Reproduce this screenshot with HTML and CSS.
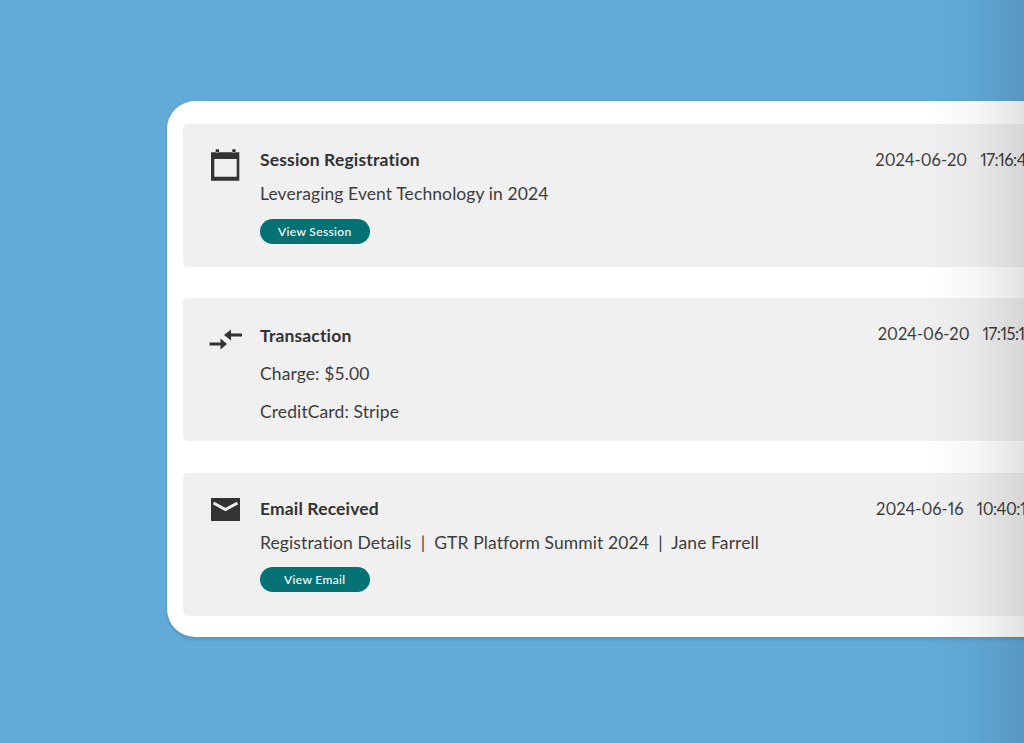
FILE: index.html
```html
<!DOCTYPE html>
<html lang="en">
<head>
    <meta charset="UTF-8">
    <meta name="viewport" content="width=device-width, initial-scale=1.0">
    <title>Activity</title>
    <link rel="stylesheet" href="styles.css">
</head>
<body>
    <div class="card">
        <div class="item">
            <div class="icon">
                <svg width="30" height="33" viewBox="0 0 30 33">
                    <path fill="#333" d="M5.700 1.300h3.300v3.500H5.700zM22.300 1.300h3.300v3.500h-3.300zM1 4.300h28.300v28.400H1zM4.300 11v17.700h22.400V11z" fill-rule="evenodd"/>
                </svg>
            </div>
            <div class="body">
                <div class="title">Session Registration</div>
                <div class="line">Leveraging Event Technology in 2024</div>
                <a class="btn">View Session</a>
            </div>
            <div class="stamp"><span>2024-06-20</span><span class="time">17:16:43</span></div>
        </div>
        <div class="item">
            <div class="icon icon-swap">
                <svg width="34" height="24" viewBox="0 0 34 24">
                    <path fill="#333" d="M16 7L23 1.500V5.500H34V8.500H23V12.500zM19 16L12.500 10.500V14.500H1.500V17.500H12.500V21.500z"/>
                </svg>
            </div>
            <div class="body">
                <div class="title title-low">Transaction</div>
                <div class="line line-wide">Charge: $5.00</div>
                <div class="line line-wide">CreditCard: Stripe</div>
            </div>
            <div class="stamp stamp-low"><span>2024-06-20</span><span class="time">17:15:10</span></div>
        </div>
        <div class="item">
            <div class="icon icon-mail">
                <svg width="30" height="23" viewBox="0 0 30 23">
                    <path fill="#333" d="M1 0h29v23H1z"/>
                    <path fill="none" stroke="#f0f0f0" stroke-width="3" d="M3.500 5L15.500 11.500L27.500 5"/>
                </svg>
            </div>
            <div class="body">
                <div class="title">Email Received</div>
                <div class="line">Registration Details &nbsp;|&nbsp; GTR Platform Summit 2024 &nbsp;|&nbsp; Jane Farrell</div>
                <a class="btn">View Email</a>
            </div>
            <div class="stamp"><span>2024-06-16</span><span class="time">10:40:13</span></div>
        </div>
    </div>
    <div class="edge"></div>
</body>
</html>
```

FILE: styles.css
```css
html, body {
    height: 100%;
}

body {
    margin: 0;
    overflow: hidden;
    background-color: #62abd9;
    font-family: Lato, "Liberation Sans", sans-serif;
    color: #333;
    padding: 101px 0 0 167px;
    box-sizing: border-box;
}

.card {
    width: 920px;
    height: 536px;
    box-sizing: border-box;
    padding: 23px 16px 0;
    background-color: #fff;
    border-radius: 28px;
    box-shadow: 0 2px 4px rgba(0, 0, 0, 0.15);
    display: flex;
    flex-direction: column;
    gap: 31.25px;
}

.item {
    display: flex;
    height: 143px;
    box-sizing: border-box;
    padding: 24px 36px 0 27px;
    background-color: #f0f0f0;
    border-radius: 5px;
}

.icon {
    width: 30px;
    margin-right: 20px;
    line-height: 0;
    flex: none;
}

.icon-swap svg {
    margin: 6px 0 0 -2px;
}

.icon-mail svg {
    margin-top: 1px;
}

.body {
    flex: 1;
}

.title {
    font-size: 17.5px;
    font-weight: 700;
    letter-spacing: 0.15px;
    line-height: 24px;
}

.title-low {
    margin-top: 2px;
}

.line {
    font-size: 17.5px;
    letter-spacing: 0.1px;
    line-height: 24px;
    margin-top: 10px;
    color: #3d3d3d;
}

.line-wide {
    margin-top: 14px;
}

.btn {
    display: block;
    width: 109.5px;
    height: 25px;
    margin-top: 12.5px;
    background-color: #047275;
    border-radius: 13px;
    color: #fff;
    font-size: 12px;
    font-weight: 500;
    letter-spacing: 0.35px;
    line-height: 25px;
    text-align: center;
}

.stamp {
    display: flex;
    gap: 13px;
    font-size: 16.5px;
    font-variant-numeric: proportional-nums;
    line-height: 24px;
    white-space: nowrap;
    color: #3d3d3d;
}

.stamp-low {
    margin-top: 0;
}

.time {
    letter-spacing: -0.5px;
}

.edge {
    position: absolute;
    top: 0;
    right: 0;
    width: 100px;
    height: 100%;
    background: linear-gradient(to right, rgba(0, 0, 0, 0), rgba(0, 0, 0, 0.03) 50%, rgba(0, 0, 0, 0.11));
}
```
